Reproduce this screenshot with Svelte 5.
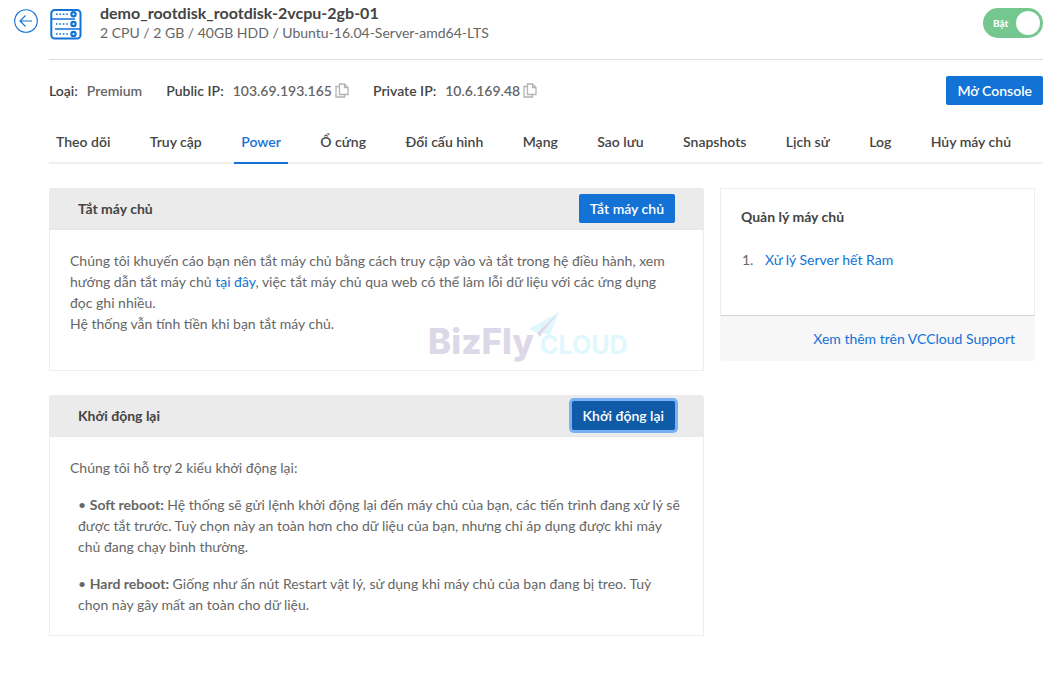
<script>
    let running = $state(true);
    let active = $state("Power");

    const tabs = [
        "Theo dõi",
        "Truy cập",
        "Power",
        "Ổ cứng",
        "Đổi cấu hình",
        "Mạng",
        "Sao lưu",
        "Snapshots",
        "Lịch sử",
        "Log",
        "Hủy máy chủ"
    ];
</script>

{#snippet copyIcon()}
    <svg width="14" height="15" viewBox="0 0 14 15" fill="none" stroke="#b3b3b3" stroke-width="1.3">
        <path d="M4.5 1 H9.5 L13 4.5 V11.5 H4.5 Z" />
        <path d="M9.5 1 V4.5 H13" />
        <path d="M4.5 3.5 H1 V14 H9.5 V11.5" />
    </svg>
{/snippet}

<div class="page">
    <header class="header">
        <a href="#back" class="back" aria-label="Quay lại">
            <svg width="24" height="24" viewBox="0 0 24 24" fill="none" stroke="#1272d6">
                <circle cx="12" cy="12" r="11.3" stroke-width="1.1" />
                <path d="M18 12 H6.5 M11.5 6.5 L6 12 L11.5 17.5" stroke-width="1.1" />
            </svg>
        </a>
        <div class="heading">
            <svg class="server" width="32" height="32" viewBox="0 0 32 32" fill="none" stroke="#1272d6" stroke-width="2">
                <rect x="1.3" y="2" width="29.2" height="28.6" rx="3.5" />
                <path d="M1 11 H25 M5 21 H31" stroke-width="1.7" />
                {#each [6.3, 16, 26] as y}
                    <path d="M6 {y} H18.5" stroke-width="1.4" stroke-dasharray="1.6 1.8" />
                    <circle cx="23.5" cy={y} r="2.1" stroke-width="2.2" />
                {/each}
            </svg>
            <div class="name">
                <h1>demo_rootdisk_rootdisk-2vcpu-2gb-01</h1>
                <p>2 CPU / 2 GB / 40GB HDD / Ubuntu-16.04-Server-amd64-LTS</p>
            </div>
            <label class="switch">
                <input type="checkbox" bind:checked={running}>
                <span>Bật</span>
            </label>
        </div>
    </header>

    <main>
        <div class="meta">
            <dl>
                <div><dt>Loại:</dt><dd>Premium</dd></div>
                <div>
                    <dt>Public IP:</dt><dd>103.69.193.165</dd>
                    <button class="copy" aria-label="Copy public IP">{@render copyIcon()}</button>
                </div>
                <div>
                    <dt>Private IP:</dt><dd>10.6.169.48</dd>
                    <button class="copy" aria-label="Copy private IP">{@render copyIcon()}</button>
                </div>
            </dl>
            <button class="btn">Mở Console</button>
        </div>

        <nav class="tabs">
            {#each tabs as tab}
                <a href="#{tab}" class:active={active === tab} onclick={() => (active = tab)}>{tab}</a>
            {/each}
        </nav>

        <div class="content">
            <div class="panels">
                <section class="panel">
                    <div class="panel-head">
                        <h2>Tắt máy chủ</h2>
                        <button class="btn">Tắt máy chủ</button>
                    </div>
                    <div class="panel-body shutdown">
                        <p>
                            Chúng tôi khuyến cáo bạn nên tắt máy chủ bằng cách truy cập vào và tắt trong hệ điều hành, xem
                            hướng dẫn tắt máy chủ <a href="#guide">tại đây</a>, việc tắt máy chủ qua web có thể làm lỗi dữ liệu với các ứng dụng
                            đọc ghi nhiều.<br>
                            Hệ thống vẫn tính tiền khi bạn tắt máy chủ.
                        </p>
                        <svg class="watermark" width="204" height="56" viewBox="0 0 204 56">
                            <text class="biz" x="0" y="44">BizFly</text>
                            <path d="M131 2 L101 19 L109 23 Z" fill="#e0f7fe" />
                            <path d="M131 2 L113 23 L122 25 Z" fill="#e0f7fe" />
                            <path d="M131 2 L109 23 L112 27 L114 23 Z" fill="#ddd8e8" />
                            <text class="cloud" x="112" y="44">CLOUD</text>
                        </svg>
                    </div>
                </section>

                <section class="panel">
                    <div class="panel-head">
                        <h2>Khởi động lại</h2>
                        <button class="btn pressed">Khởi động lại</button>
                    </div>
                    <div class="panel-body">
                        <p>Chúng tôi hỗ trợ 2 kiểu khởi động lại:</p>
                        <ul>
                            <li>
                                • <b>Soft reboot:</b> Hệ thống sẽ gửi lệnh khởi động lại đến máy chủ của bạn, các tiến trình đang xử lý sẽ
                                được tắt trước. Tuỳ chọn này an toàn hơn cho dữ liệu của bạn, nhưng chỉ áp dụng được khi máy
                                chủ đang chạy bình thường.
                            </li>
                            <li>
                                • <b>Hard reboot:</b> Giống như ấn nút Restart vật lý, sử dụng khi máy chủ của bạn đang bị treo. Tuỳ
                                chọn này gây mất an toàn cho dữ liệu.
                            </li>
                        </ul>
                    </div>
                </section>
            </div>

            <aside>
                <div class="help">
                    <h2>Quản lý máy chủ</h2>
                    <ol>
                        <li><a href="#ram">Xử lý Server hết Ram</a></li>
                    </ol>
                </div>
                <div class="more"><a href="#support">Xem thêm trên VCCloud Support</a></div>
            </aside>
        </div>
    </main>
</div>

<style>
    :global(body) {
        margin: 0;
        background: #fff;
    }

    .page {
        padding: 0 17px 38px 14px;
        font-family: Lato, "Liberation Sans", sans-serif;
        font-size: 14px;
        line-height: 21px;
        color: #666;
    }

    h1, h2, p, dl, dd, ul, ol {
        margin: 0;
        padding: 0;
    }

    a {
        color: #1272d6;
        text-decoration: none;
    }

    .header {
        display: flex;
        gap: 11px;
    }

    .back {
        height: 24px;
        margin-top: 9px;
    }

    .back svg, .server, .copy svg {
        display: block;
    }

    .heading {
        flex: 1;
        display: flex;
        height: 59px;
        border-bottom: 1px solid #ddd;
    }

    .server {
        margin: 8px 18px 0 1px;
    }

    .name {
        flex: 1;
        padding-top: 3px;
    }

    h1 {
        font-size: 16px;
        line-height: 20px;
        font-weight: 700;
        color: #444;
    }

    .name p {
        line-height: 20px;
    }

    .switch {
        display: flex;
        align-items: center;
        position: relative;
        height: 30px;
        margin-top: 8px;
    }

    .switch input {
        appearance: none;
        width: 60px;
        height: 30px;
        margin: 0;
        border-radius: 15px;
        background: #bbb;
    }

    .switch input:checked {
        background: #75c790;
    }

    .switch input::after {
        content: "";
        display: block;
        width: 24px;
        height: 24px;
        margin: 3px;
        border-radius: 50%;
        background: #fff;
    }

    .switch input:checked::after {
        margin-left: 33px;
    }

    .switch span {
        position: absolute;
        left: 10px;
        font-size: 10px;
        font-weight: 900;
        color: #fff;
    }

    main {
        margin-left: 35px;
    }

    .meta {
        display: flex;
        align-items: center;
        justify-content: space-between;
        padding: 16px 0;
        font-weight: 600;
    }

    dl, dl div {
        display: flex;
        align-items: center;
    }

    dl {
        gap: 24px;
    }

    dt {
        margin-right: 9px;
        color: #444;
    }

    .copy {
        margin-left: 3px;
        padding: 0;
        border: 0;
        background: none;
    }

    .btn {
        height: 29px;
        padding: 0 11px;
        border: 0;
        border-radius: 2px;
        font: 600 14px Lato, "Liberation Sans", sans-serif;
        color: #fff;
        background: #1272d6;
    }

    .btn.pressed {
        background: #0f5ba7;
        box-shadow: 0 0 0 3px #76b1f5;
    }

    .tabs {
        display: flex;
        justify-content: space-between;
        height: 41px;
        padding-right: 25px;
        border-bottom: 2px solid #f0f0f0;
    }

    .tabs a {
        margin-bottom: -2px;
        padding: 10px 7px;
        font-weight: 600;
        color: #444;
        white-space: nowrap;
    }

    .tabs a.active {
        color: #1272d6;
        border-bottom: 2px solid #1272d6;
    }

    .content {
        display: grid;
        grid-template-columns: 655fr 315fr;
        align-items: start;
        gap: 16px;
        padding: 24px 8px 0 0;
    }

    .panels {
        display: grid;
        gap: 24px;
    }

    .panel-head {
        display: flex;
        align-items: center;
        justify-content: space-between;
        height: 41px;
        padding: 0 29px;
        border-bottom: 1px solid #e8e8e8;
        border-radius: 3px 3px 0 0;
        background: #ebebeb;
    }

    h2 {
        font-size: 14px;
        line-height: 21px;
        font-weight: 700;
        color: #444;
    }

    .panel-body {
        padding: 20px;
        border: 1px solid #eee;
        border-top: 0;
    }

    .shutdown {
        position: relative;
        padding: 20px 30px 36px 20px;
    }

    .watermark {
        position: absolute;
        left: 378px;
        bottom: 4px;
        overflow: visible;
    }

    .biz {
        font: 800 35px Inter, sans-serif;
        fill: #ddd8e8;
    }

    .cloud {
        font: 700 25px Inter, sans-serif;
        fill: #e0f7fe;
    }

    ul {
        list-style: none;
    }

    li {
        margin: 16px 0 0 8px;
    }

    b {
        font-weight: 700;
    }

    .help {
        padding: 17px 20px 45px;
        border: 1px solid #eee;
        border-bottom-color: #d5d5d5;
    }

    ol {
        padding-left: 16px;
    }

    .help li {
        margin: 22px 0 0;
        padding-left: 8px;
    }

    .more {
        padding: 12px 20px;
        border-radius: 0 0 3px 3px;
        text-align: right;
        background: #f7f7f7;
    }
</style>
